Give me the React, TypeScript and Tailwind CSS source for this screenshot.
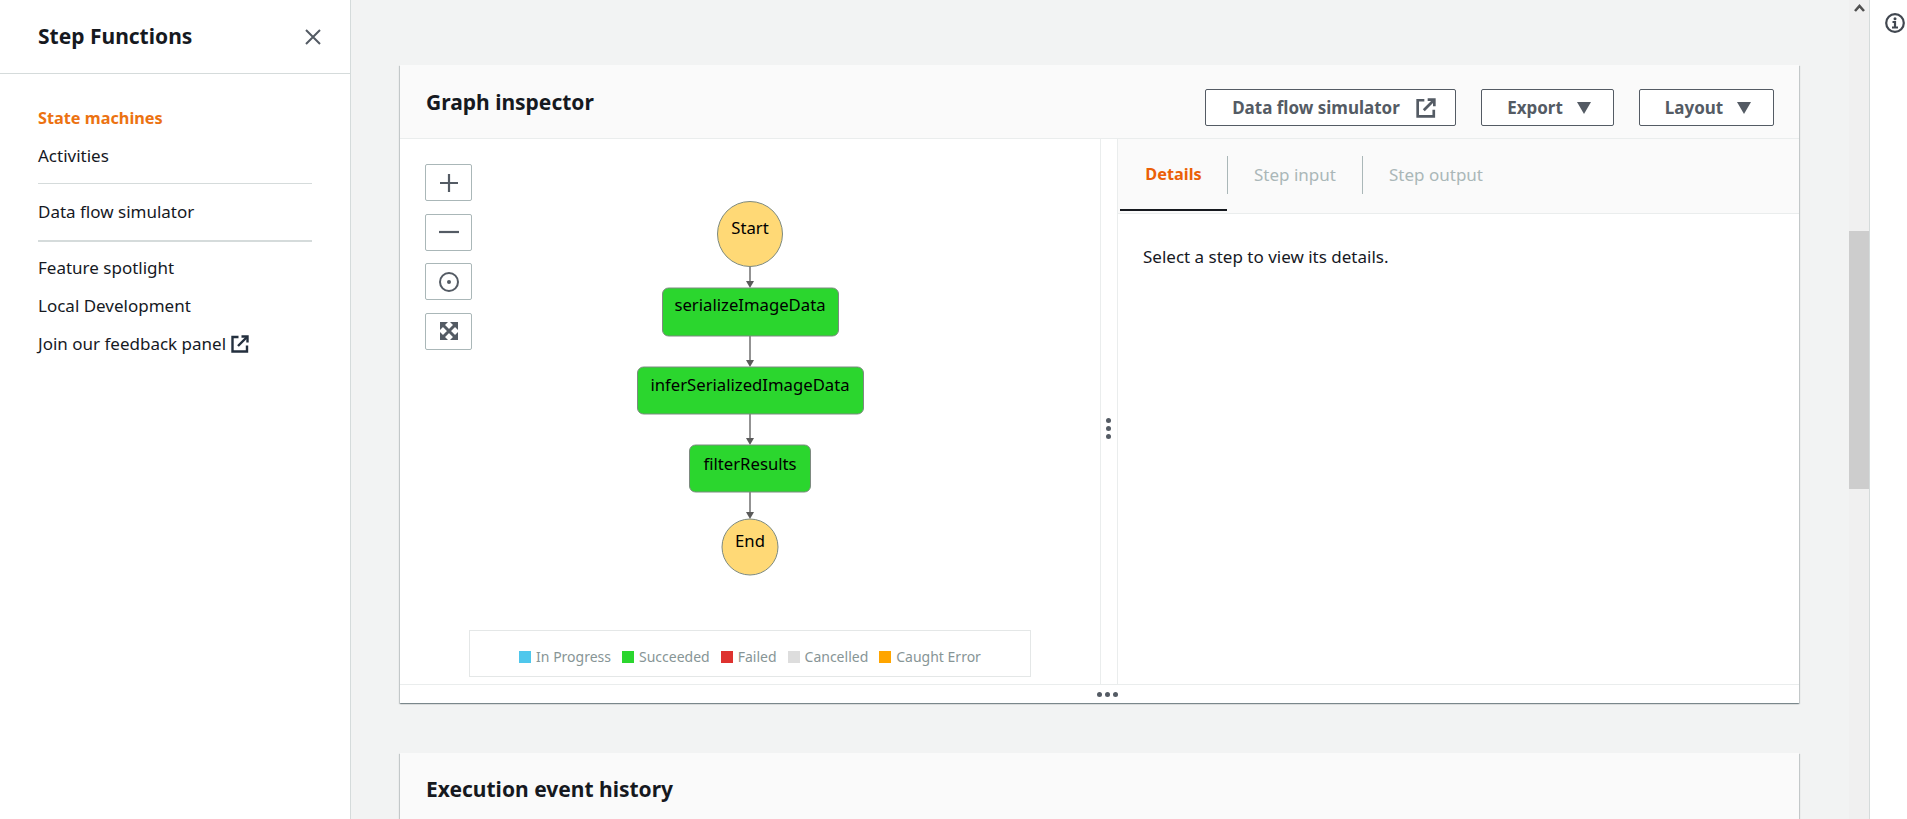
import React from 'react';

const font = 'font-["Noto_Sans","Open_Sans",sans-serif]';

function LaunchIcon({ className }: { className?: string }) {
  return (
    <svg viewBox="0 0 18 18" fill="none" stroke="currentColor" strokeWidth="2.400" className={className}>
      <path d="M7.500 2H1.500v14.500H16V10.500" />
      <path d="M10.500 1.500h6v6" />
      <path d="M16 2 7 11" />
    </svg>
  );
}

function Caret({ className }: { className?: string }) {
  return (
    <svg viewBox="0 0 14 12" fill="currentColor" className={className}>
      <path d="M0 0h14L7 12z" />
    </svg>
  );
}

function NavLink({ children, active }: { children: React.ReactNode; active?: boolean }) {
  return (
    <a className={`flex h-[38px] items-center ${active ? 'text-[16.300px] font-bold text-[#ec7211]' : 'text-[17px] text-[#16191f]'}`}>
      {children}
    </a>
  );
}

function Sidebar() {
  return (
    <aside className="w-[351px] shrink-0 border-r border-[#d5dbdb] bg-white">
      <div className="flex h-[74px] items-center justify-between border-b border-[#d5dbdb] pl-[38px] pr-[29px]">
        <h2 className="text-[21px] font-bold text-[#16191f]">Step Functions</h2>
        <svg viewBox="0 0 16 16" className="h-[16px] w-[16px] text-[#545b64]" fill="none" stroke="currentColor" strokeWidth="2">
          <path d="M1 1l14 14M15 1 1 15" />
        </svg>
      </div>
      <nav className="px-[38px] pt-[25px]">
        <NavLink active>State machines</NavLink>
        <NavLink>Activities</NavLink>
        <div className="mb-[9px] mt-2 border-t border-[#d5dbdb]" />
        <NavLink>Data flow simulator</NavLink>
        <div className="mb-[7px] mt-[9px] border-t-2 border-[#d5dbdb]" />
        <NavLink>Feature spotlight</NavLink>
        <NavLink>Local Development</NavLink>
        <NavLink>
          Join our feedback panel
          <LaunchIcon className="ml-[5px] h-[18px] w-[18px] text-[#232f3e]" />
        </NavLink>
      </nav>
    </aside>
  );
}

function HeaderButton({ children, className }: { children: React.ReactNode; className?: string }) {
  return (
    <button className={`flex h-[37px] items-center justify-center rounded-[2px] border border-[#545b64] bg-white text-[17px] font-bold text-[#545b64] ${className ?? ''}`}>
      {children}
    </button>
  );
}

function ZoomButton({ children }: { children: React.ReactNode }) {
  return (
    <button className="flex h-[37px] w-[47px] items-center justify-center rounded-[2px] border border-[#aab7b8] bg-white text-[#545b64]">
      {children}
    </button>
  );
}

function GraphControls() {
  return (
    <div className="absolute left-[25px] top-[25px] z-10 flex flex-col gap-[12.600px]">
      <ZoomButton>
        <svg viewBox="0 0 18 18" className="h-[18px] w-[18px]" fill="none" stroke="currentColor" strokeWidth="2.200">
          <path d="M0 9h18M9 0v18" />
        </svg>
      </ZoomButton>
      <ZoomButton>
        <svg viewBox="0 0 20 4" className="h-[4px] w-[20px]" fill="none" stroke="currentColor" strokeWidth="2.200">
          <path d="M0 2h20" />
        </svg>
      </ZoomButton>
      <ZoomButton>
        <svg viewBox="0 0 20 20" className="h-[20px] w-[20px]" fill="none" stroke="currentColor" strokeWidth="2">
          <circle cx="10" cy="10" r="9" />
          <circle cx="10" cy="10" r="2" fill="currentColor" stroke="none" />
        </svg>
      </ZoomButton>
      <ZoomButton>
        <svg viewBox="0 0 18 18" className="h-[18px] w-[18px]" fill="currentColor">
          <path d="M0 0h8L0 8zM18 0v8l-8-8zM0 18v-8l8 8zM18 18h-8l8-8z" />
          <path d="M2 2l14 14M16 2 2 16" stroke="currentColor" strokeWidth="3" />
        </svg>
      </ZoomButton>
    </div>
  );
}

function StateGraph() {
  return (
    <svg className="absolute left-0 top-0 h-[448px] w-[700px]" viewBox="0 0 700 448">
      <path d="M350 127v16M350 197v25M350 275v25M350 353v21" fill="none" stroke="#707070" strokeWidth="1.500" />
      <g fill="#5a5a5a">
        <path d="M346 142l4 7 4-7z" />
        <path d="M346 221l4 7 4-7z" />
        <path d="M346 299l4 7 4-7z" />
        <path d="M346 373l4 7 4-7z" />
      </g>
      <g stroke="#7d8a80" strokeWidth="1">
        <circle cx="350" cy="95" r="32.500" fill="#ffd976" />
        <rect x="262.500" y="149" width="176" height="48" rx="6" fill="#2bd62e" />
        <rect x="237.500" y="228" width="226" height="47" rx="6" fill="#2bd62e" />
        <rect x="289.500" y="306" width="121" height="47" rx="6" fill="#2bd62e" />
        <circle cx="350" cy="408" r="28" fill="#ffd976" />
      </g>
      <g fontSize="16.700" fill="#000" textAnchor="middle" fontFamily="'Noto Sans', sans-serif">
        <text x="350" y="95">Start</text>
        <text x="350" y="172">serializeImageData</text>
        <text x="350" y="252">inferSerializedImageData</text>
        <text x="350" y="331">filterResults</text>
        <text x="350" y="408">End</text>
      </g>
    </svg>
  );
}

function Legend() {
  const items = [
    ['In Progress', 'bg-[#4fc7ec]'],
    ['Succeeded', 'bg-[#2bd62e]'],
    ['Failed', 'bg-[#de322f]'],
    ['Cancelled', 'bg-[#dddddd]'],
    ['Caught Error', 'bg-[#ffa500]'],
  ];
  return (
    <div className="absolute bottom-[7px] left-[69px] flex h-[47px] w-[562px] items-end justify-center gap-[11px] border border-[#e4e7e7] bg-white pb-[9px]">
      {items.map(([label, color]) => (
        <div key={label} className="flex items-center gap-[5px] text-sm text-[#879596]">
          <span className={`h-[12px] w-[12px] ${color}`} />
          {label}
        </div>
      ))}
    </div>
  );
}

function Dots({ vertical }: { vertical?: boolean }) {
  return (
    <div className={`flex ${vertical ? 'flex-col gap-[3px]' : 'gap-[3px]'}`}>
      <span className="h-[5px] w-[5px] rounded-full bg-[#545b64]" />
      <span className="h-[5px] w-[5px] rounded-full bg-[#545b64]" />
      <span className="h-[5px] w-[5px] rounded-full bg-[#545b64]" />
    </div>
  );
}

function Inspector() {
  return (
    <section className="h-[638px] shrink-0 bg-white shadow-[0_1px_1px_0_rgba(0,28,36,0.3),1px_1px_1px_0_rgba(0,28,36,0.15),-1px_1px_1px_0_rgba(0,28,36,0.15)]">
      <div className="flex h-[74px] items-start justify-between border-b border-[#eaeded] bg-[#fafafa] pl-[26px] pr-[25px] pt-[24px]">
        <h2 className="text-[21px] font-bold leading-[26px] text-[#16191f]">Graph inspector</h2>
        <div className="flex gap-[25px]">
          <HeaderButton className="w-[251px] gap-[16px] pl-[7px]">
            Data flow simulator
            <LaunchIcon className="h-[20px] w-[20px]" />
          </HeaderButton>
          <HeaderButton className="w-[133px] gap-[14px] pl-[3px]">
            Export
            <Caret className="h-[12px] w-[14px]" />
          </HeaderButton>
          <HeaderButton className="w-[135px] gap-[14px] pl-[3px]">
            Layout
            <Caret className="h-[12px] w-[14px]" />
          </HeaderButton>
        </div>
      </div>
      <div className="flex h-[545px]">
        <div className="relative w-[700px] shrink-0">
          <GraphControls />
          <StateGraph />
          <Legend />
        </div>
        <div className="flex w-[18px] shrink-0 items-center justify-center border-x border-[#eaeded] pr-[2px] pt-[34px]">
          <Dots vertical />
        </div>
        <div className="flex-1">
          <div className="flex h-[75px] items-start border-b border-[#eaeded] bg-[#fafafa]">
            <div className="ml-[2px] flex h-[72px] w-[107px] items-center justify-center border-b-[2px] border-[#16191f] text-[16.300px] font-bold text-[#eb5f07]">
              Details
            </div>
            <div className="mt-[17px] flex h-[38px] w-[135px] items-center justify-center border-l border-[#aab7b8] text-[17px] text-[#aab7b8]">
              Step input
            </div>
            <div className="mt-[17px] flex h-[38px] w-[147px] items-center justify-center border-l border-[#aab7b8] text-[17px] text-[#aab7b8]">
              Step output
            </div>
          </div>
          <p className="pl-[25px] pt-[30px] text-[17px] text-[#16191f]">Select a step to view its details.</p>
        </div>
      </div>
      <div className="flex h-[19px] items-center justify-center border-t border-[#eaeded] pl-[15px]">
        <Dots />
      </div>
    </section>
  );
}

export default function App() {
  return (
    <div className={`flex h-[819px] w-full overflow-hidden bg-white ${font}`}>
      <Sidebar />
      <main className="flex min-w-0 flex-1 flex-col gap-[50px] overflow-hidden bg-[#f2f3f3] pl-[49px] pr-[50px] pt-[65px]">
        <Inspector />
        <section className="h-[100px] shrink-0 bg-[#fafafa] pl-[26px] pt-[23px] shadow-[0_1px_1px_0_rgba(0,28,36,0.3),1px_1px_1px_0_rgba(0,28,36,0.15),-1px_1px_1px_0_rgba(0,28,36,0.15)]">
          <h2 className="text-[21px] font-bold leading-[26px] text-[#16191f]">Execution event history</h2>
        </section>
      </main>
      <div className="relative w-[21px] shrink-0 border-r border-[#d5dbdb] bg-[#f0f0f0] pt-[4px]">
        <svg viewBox="0 0 11 8" className="mx-auto h-[8px] w-[11px] text-[#505050]" fill="none" stroke="currentColor" strokeWidth="2.600">
          <path d="M1 7l4.500-5L10 7" />
        </svg>
        <div className="absolute left-0 right-0 top-[231px] h-[258px] bg-[#cdcdcd]" />
      </div>
      <div className="w-[37px] shrink-0 pl-[15px] pt-[13px]">
        <svg viewBox="0 0 20 20" className="h-[20px] w-[20px] text-[#414750]" fill="none" stroke="currentColor" strokeWidth="2.200">
          <circle cx="10" cy="10" r="8.800" />
          <path d="M7.500 9h2.500v5M7 14.500h6" />
          <circle cx="10" cy="5.800" r="1.500" fill="currentColor" stroke="none" />
        </svg>
      </div>
    </div>
  );
}
